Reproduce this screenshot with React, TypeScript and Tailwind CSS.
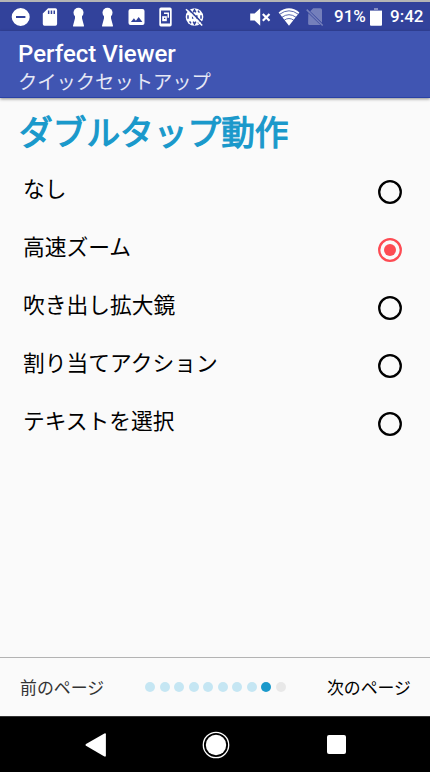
import { ReactNode, useState } from "react";
import clsx from "clsx";

const OPTIONS = [
  "なし",
  "高速ズーム",
  "吹き出し拡大鏡",
  "割り当てアクション",
  "テキストを選択",
];

const PAGE_COUNT = 10;

function Icon({ className, children }: { className?: string; children: ReactNode }) {
  return (
    <svg viewBox="0 0 20 20" className={clsx("h-5 w-5 shrink-0", className)} fill="#fff">
      {children}
    </svg>
  );
}

function KeyholeIcon({ className }: { className?: string }) {
  return (
    <Icon className={className}>
      <circle cx="9.500" cy="5.800" r="5" />
      <path d="M6 8h7v3.200l2 7.600q.2.600-.4.600H4.400q-.6 0-.4-.6l2-7.600z" />
    </Icon>
  );
}

function StatusBar() {
  return (
    <div className="flex h-[31px] items-center border-t-2 border-[#b5b5b5] bg-[#32429b] pr-[6px] pl-[11px] text-[17px] font-medium text-white">
      <Icon>
        <path fillRule="evenodd" d="M9.700 1a9 9 0 1 0 0 18 9 9 0 0 0 0-18zM5 8.900h9.400v2.100H5z" />
      </Icon>
      <Icon className="ml-[9px]">
        <path
          fillRule="evenodd"
          d="M8.100 1.200H15.400a1.700 1.700 0 0 1 1.700 1.700V17a1.700 1.700 0 0 1-1.700 1.700H4.500A1.700 1.700 0 0 1 2.800 17V6.600zM7.900 3.600v3.500h1.500V3.600zm2.800 0v3.500h1.500V3.600zm2.800 0v3.500h1.500V3.600z"
        />
      </Icon>
      <KeyholeIcon className="ml-[9px]" />
      <KeyholeIcon className="ml-[9px]" />
      <Icon className="ml-[9px]">
        <path
          fillRule="evenodd"
          d="M3.500 2h12a2 2 0 0 1 2 2v12a2 2 0 0 1-2 2h-12a2 2 0 0 1-2-2V4a2 2 0 0 1 2-2zm.4 13h11.500l-3.700-5-2.800 3.700-2-2.400z"
        />
      </Icon>
      <Icon className="ml-[9px]">
        <path
          fillRule="evenodd"
          d="M5 .5h9A1.700 1.700 0 0 1 15.700 2.200v15.600a1.700 1.700 0 0 1-1.700 1.700H5a1.700 1.700 0 0 1-1.700-1.700V2.200A1.700 1.700 0 0 1 5 .5zm0 3v13h9v-13z"
        />
        <path d="M8 5.500h5v5.300h-1.500V7H8z" />
        <path d="M6.200 9.200h4.600v5H6.200z" />
        <path d="M8 10.700h1.300V12H8z" fill="#32429b" />
      </Icon>
      <Icon className="ml-[9px]">
        <circle cx="9.500" cy="10" r="8.800" />
        <g stroke="#32429b" strokeWidth="1.500" fill="none">
          <path d="M3 8.300v3.400M7.700 8.200v3.600M11.800 8.200v3.600M16 8.300v3.400" />
          <path d="M8.200 5.300L9.500 2.800l1.300 2.500M8.200 14.700l1.300 2.500 1.300-2.500" />
          <path d="M13 3.600l1.400 2M6 3.600L4.600 5.600M13 16.400l1.400-2M6 16.400l-1.400-2" />
        </g>
        <path d="M2 .8l16.700 16.600" stroke="#32429b" strokeWidth="1.600" />
        <path d="M1 2.200l16.200 16.300" stroke="#fff" strokeWidth="1.600" />
      </Icon>

      <svg viewBox="0 0 22 20" className="ml-auto h-5 w-[22px] shrink-0" fill="#fff">
        <path d="M.2 6.500h4.400L10.200 1.300v17.400L4.600 13.500H.2z" />
        <path d="M12.800 7l6.700 6.700m0-6.700l-6.700 6.700" stroke="#fff" strokeWidth="2.200" />
      </svg>
      <svg viewBox="0 0 22 20" className="ml-[6px] h-5 w-[22px] shrink-0" fill="#fff">
        <path d="M.6 5.500Q11-2.800 21.400 5.500L11 18.800z" />
        <path
          d="M1.600 7.300q9.400-7 18.800 0M3.900 10.300q7.100-5.200 14.200 0M6.200 13.200q4.800-3.400 9.600 0"
          fill="none"
          stroke="#32429b"
          strokeWidth=".8"
        />
      </svg>
      <Icon className="ml-[5px]">
        <g opacity=".32">
          <path d="M8.200 1.300h7.200a1.600 1.600 0 0 1 1.600 1.600v12.800L5.200 4.300zM3.300 6.200L15.500 18H4.700a1.600 1.600 0 0 1-1.600-1.600z" />
          <path d="M1.700 2.600l16 15.900" stroke="#fff" strokeWidth="1.500" />
        </g>
      </Icon>
      <span className="ml-[9px] w-[32px] whitespace-nowrap">91%</span>
      <svg viewBox="0 0 12 18" className="ml-[4px] h-[18px] w-3 shrink-0" fill="#fff">
        <path opacity=".4" d="M4 0h4v2h4v3H0V2h4z" />
        <path d="M0 3h12v13.800a1 1 0 0 1-1 1H1a1 1 0 0 1-1-1z" />
      </svg>
      <span className="ml-[8px] w-[34px]">9:42</span>
    </div>
  );
}

function Header() {
  return (
    <header className="relative h-[67px] border-b border-[#2941a5] bg-[#4055b2] pt-[8px] pl-[18px] text-white shadow-[0_1px_3px_rgba(0,0,0,0.45)]">
      <h1 className="text-[24px] leading-[30px] font-medium">Perfect Viewer</h1>
      <p className="mt-px text-[19.300px] leading-[26px] text-[#e6e8f5]">クイックセットアップ</p>
    </header>
  );
}

function Option({
  label,
  checked,
  onSelect,
}: {
  label: string;
  checked: boolean;
  onSelect: () => void;
}) {
  return (
    <li>
      <button
        role="radio"
        aria-checked={checked}
        onClick={onSelect}
        className="flex h-[58px] w-full items-center justify-between pr-[28px] pl-[23px]"
      >
        <span className="pb-[5px] text-[21.750px] leading-[30px] text-black">{label}</span>
        <svg
          viewBox="0 0 24 24"
          className={clsx("size-6", checked ? "text-[#fd4b53]" : "text-black")}
        >
          <circle cx="12" cy="12" r="10.800" fill="none" stroke="currentColor" strokeWidth="2.300" />
          {checked && <circle cx="12" cy="12" r="6" fill="currentColor" />}
        </svg>
      </button>
    </li>
  );
}

function Footer({ page }: { page: number }) {
  return (
    <footer className="flex h-[59px] items-center justify-between border-t border-[#b3b3b3] pr-[19px] pl-[20px] text-[16.900px]">
      <button className="pt-[3px] text-[#333]">前のページ</button>
      <div className="flex gap-[4.500px]">
        {Array.from({ length: PAGE_COUNT }, (_, i) => (
          <span
            key={i}
            className={clsx(
              "size-[10px] rounded-full",
              i < page && "bg-[#c5e6f3]",
              i === page && "bg-[#1a99cb]",
              i > page && "bg-[#e8e8e8]"
            )}
          />
        ))}
      </div>
      <button className="pt-[3px] text-black">次のページ</button>
    </footer>
  );
}

function NavBar() {
  return (
    <nav className="flex h-14 items-center justify-between border-t border-[#333] bg-black pr-[84px] pl-[83px]">
      <svg viewBox="0 0 26 26" className="size-[26px]" fill="#fff">
        <path d="M3 12.100L21.400 1.500q1.500-.7 1.500 1v20.900q0 1.700-1.500 1L3 13.800Q1.800 13 3 12.100z" />
      </svg>
      <svg viewBox="0 0 28 28" className="-ml-[4px] size-7">
        <circle cx="14" cy="14" r="12.700" fill="none" stroke="#fff" strokeWidth="1.300" />
        <circle cx="14" cy="14" r="10.200" fill="#fff" />
      </svg>
      <span className="size-[19px] rounded-[2px] bg-white" />
    </nav>
  );
}

export default function App() {
  const [selected, setSelected] = useState<number>(1);

  return (
    <div className="flex h-[772px] w-[430px] flex-col overflow-hidden bg-[#fafafa] font-[Roboto,'Noto_Sans_CJK_JP',sans-serif]" lang="ja">
      <StatusBar />
      <Header />
      <main className="flex-1">
        <h2 className="pt-[12px] pl-[19px] text-[33.700px] leading-[48px] text-[#1a99cb] [-webkit-text-stroke:1.200px_#1a99cb]">
          ダブルタップ動作
        </h2>
        <ul className="mt-[5px]" role="radiogroup">
          {OPTIONS.map((label, i) => (
            <Option
              key={label}
              label={label}
              checked={i === selected}
              onSelect={() => setSelected(i)}
            />
          ))}
        </ul>
      </main>
      <Footer page={8} />
      <NavBar />
    </div>
  );
}
